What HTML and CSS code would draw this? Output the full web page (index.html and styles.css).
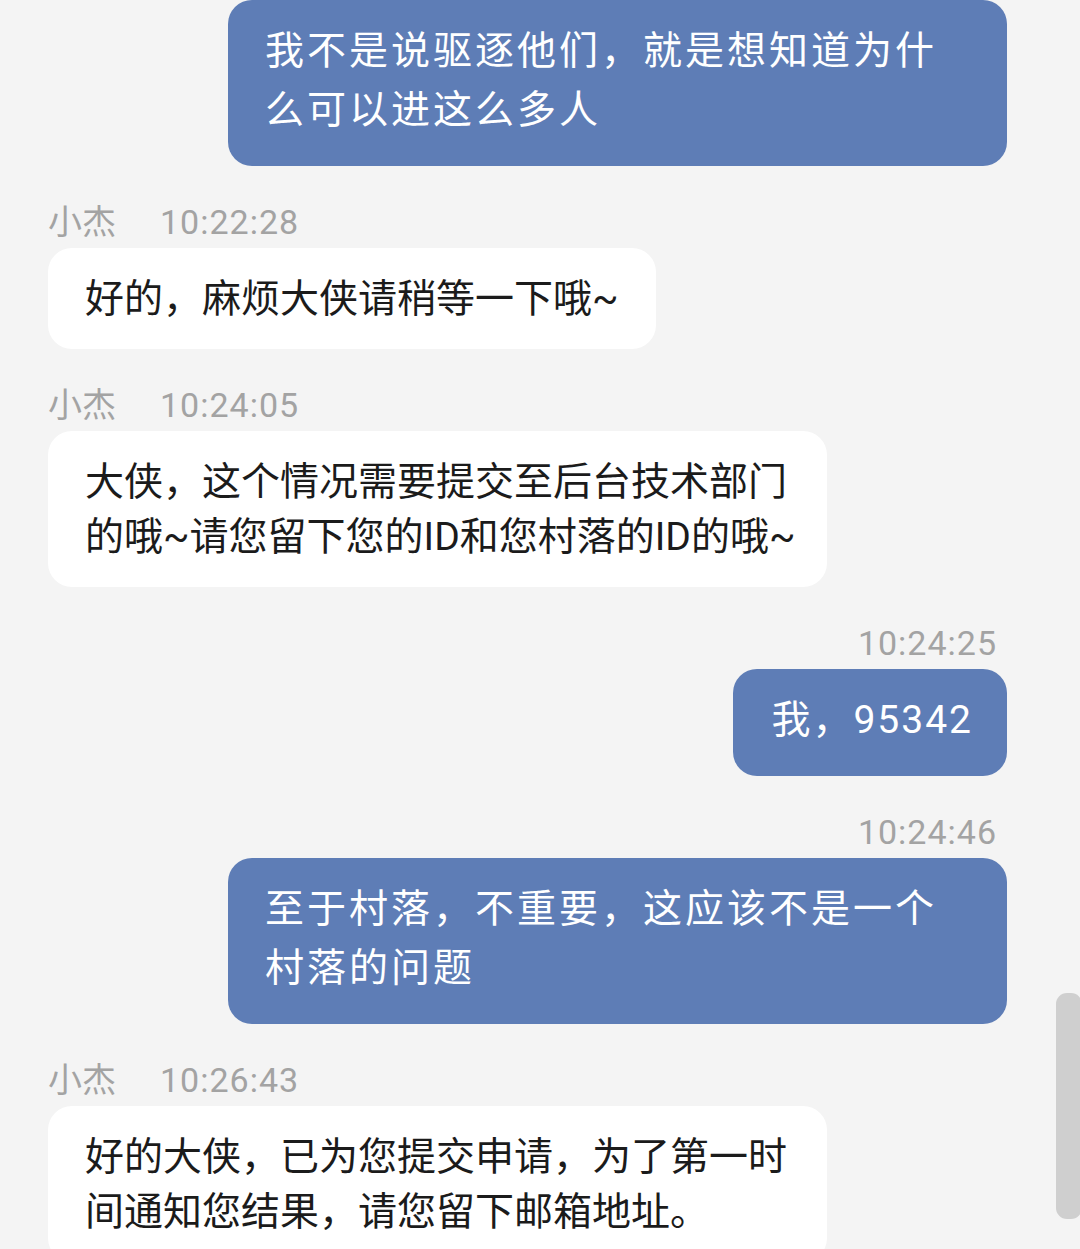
FILE: index.html
```html
<!DOCTYPE html>
<html lang="zh-CN">
<head>
<meta charset="utf-8">
<title>Chat</title>
<link rel="stylesheet" href="styles.css">
</head>
<body>
<div class="chat">
  <div class="msg out first">
    <div class="bubble blue wide">我不是说驱逐他们，就是想知道为什<br>么可以进这么多人</div>
  </div>
  <div class="msg in">
    <div class="meta"><span class="name">小杰</span><span class="time">10:22:28</span></div>
    <div class="bubble white">好的，麻烦大侠请稍等一下哦~</div>
  </div>
  <div class="msg in">
    <div class="meta"><span class="name">小杰</span><span class="time">10:24:05</span></div>
    <div class="bubble white wide">大侠，这个情况需要提交至后台技术部门<br>的哦~请您留下您的ID和您村落的ID的哦~</div>
  </div>
  <div class="msg out">
    <div class="meta"><span class="time">10:24:25</span></div>
    <div class="bubble blue short">我，95342</div>
  </div>
  <div class="msg out">
    <div class="meta"><span class="time">10:24:46</span></div>
    <div class="bubble blue wide">至于村落，不重要，这应该不是一个<br>村落的问题</div>
  </div>
  <div class="msg in">
    <div class="meta"><span class="name">小杰</span><span class="time">10:26:43</span></div>
    <div class="bubble white wide">好的大侠，已为您提交申请，为了第一时<br>间通知您结果，请您留下邮箱地址。</div>
  </div>
</div>
<div class="scrollbar"></div>
</body>
</html>
```
FILE: styles.css
```css
html, body {
  margin: 0;
  padding: 0;
  height: 100%;
}
body {
  background: #f4f4f4;
  overflow: hidden;
  font-family: Roboto, "Noto Sans CJK SC", sans-serif;
  position: relative;
}
.chat {
  display: flex;
  flex-direction: column;
  padding: 0 73px 0 48px;
}
.msg {
  display: flex;
  flex-direction: column;
  gap: 6px;
  margin-top: 36px;
}
.msg.first {
  margin-top: 0;
}
.msg.in {
  align-items: flex-start;
}
.msg.out {
  align-items: flex-end;
}
.meta {
  display: flex;
  gap: 44px;
  height: 40px;
  line-height: 40px;
  font-size: 34px;
  color: #a3a3a3;
}
.msg.out .meta {
  padding-right: 10px;
}
.time {
  letter-spacing: 1px;
}
.bubble {
  box-sizing: border-box;
  border-radius: 24px;
  font-size: 39px;
  white-space: nowrap;
}
.bubble.wide {
  width: 779px;
}
.bubble.white {
  background: #ffffff;
  color: #1b1b1b;
  line-height: 55px;
  padding: 24px 37px 22px;
}
.bubble.blue {
  background: #5e7db6;
  color: #ffffff;
  line-height: 59px;
  padding: 22px 34px 26px 37px;
  letter-spacing: 3px;
}
.bubble.blue.short {
  padding-left: 38px;
  padding-right: 34px;
  letter-spacing: 2px;
}
.scrollbar {
  position: absolute;
  left: 1056px;
  top: 993px;
  width: 26px;
  height: 226px;
  border-radius: 11px;
  background: #cfcfcf;
}
```
